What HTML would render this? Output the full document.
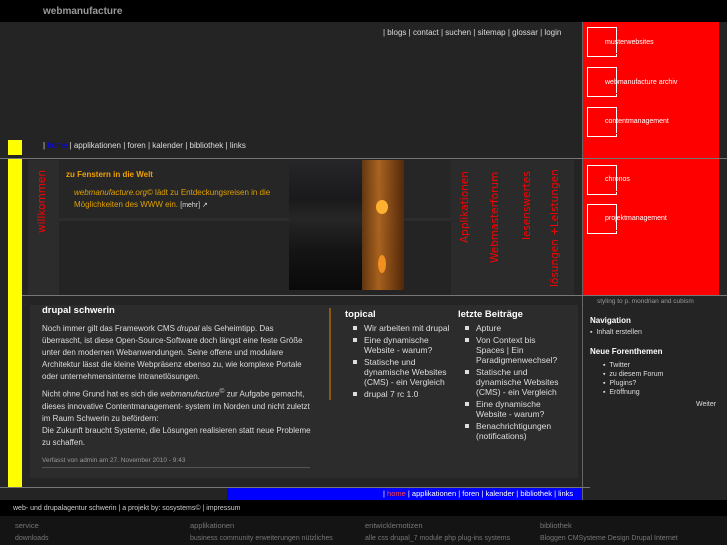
<!DOCTYPE html>
<html><head><meta charset="utf-8"><style>
*{margin:0;padding:0;box-sizing:border-box}
body{width:727px;height:545px;background:#242424;font-family:"Liberation Sans",sans-serif;position:relative;overflow:hidden;color:#ddd}
.a{position:absolute}
.t{font-size:8px;white-space:nowrap}
.box{position:absolute;left:587px;width:29px;height:30px;border:1px solid #fff;border-right:none}
.box:after{content:"";position:absolute;right:-1px;top:-1px;width:1px;height:26px;background:#fff}
.box:before{content:"";position:absolute;right:-1px;bottom:-1px;width:1px;height:3px;background:#fff}
.rl{position:absolute;left:605px;font-size:7px;color:#fff;white-space:nowrap}
.v{position:absolute;color:#f00;font-size:10.5px;line-height:12px;white-space:nowrap;transform:rotate(-90deg);transform-origin:left top;font-family:"DejaVu Sans",sans-serif}
ul{list-style:none}
li{position:relative;padding-left:14px;font-size:8.5px;line-height:10px;margin-bottom:2px;color:#ddd}
li:before{content:"";position:absolute;left:3px;top:3px;width:4px;height:4px;background:#ddd}
</style></head><body>
<div class="a" style="left:0;top:0;width:727px;height:22px;background:#000"></div>
<div class="a t" style="left:43px;top:6px;font-size:10px;font-weight:bold;color:#999">webmanufacture</div>
<div class="a t" style="left:383px;top:28px;color:#ddd">| blogs | contact | suchen | sitemap | glossar | login</div>
<div class="a" style="left:583px;top:22px;width:136px;height:273px;background:#f00"></div>
<div class="a" style="left:582px;top:22px;width:1px;height:480px;background:#666"></div>
<div class="box" style="top:27px"></div><div class="rl" style="top:39px">musterwebsites</div>
<div class="box" style="top:67px"></div><div class="rl" style="top:79px">webmanufacture archiv</div>
<div class="box" style="top:107px"></div><div class="rl" style="top:118px">contentmanagement</div>
<div class="box" style="top:165px"></div><div class="rl" style="top:176px">chronos</div>
<div class="box" style="top:204px"></div><div class="rl" style="top:215px">projektmanagement</div>
<div class="a" style="left:0;top:158px;width:727px;height:1px;background:#777"></div>
<div class="a" style="left:8px;top:140px;width:14px;height:15px;background:#ff0"></div>
<div class="a" style="left:8px;top:159px;width:14px;height:328px;background:#ff0"></div>
<div class="a t" style="left:43px;top:141px">| <span style="color:#00f">home</span> | applikationen | foren | kalender | bibliothek | links</div>
<div class="a" style="left:28px;top:160px;width:31px;height:135px;background:#2c2c2c"></div>
<div class="a" style="left:59px;top:160px;width:392px;height:58px;background:#262626"></div>
<div class="a" style="left:59px;top:218px;width:392px;height:3px;background:#2c2c2c"></div>
<div class="v" style="left:36px;top:233px">willkommen</div>
<div class="a t" style="left:66px;top:170px;color:#f0a000;font-weight:bold">zu Fenstern in die Welt</div>
<div class="a" style="left:74px;top:187px;width:210px;font-size:8px;line-height:12px;color:#e0a000"><i>webmanufacture.org©</i> lädt zu Entdeckungsreisen in die Möglichkeiten des WWW ein. <span style="color:#ddd;font-size:7px">[mehr] ↗</span></div>
<div class="a" style="left:289px;top:160px;width:115px;height:130px;background:linear-gradient(#262628,#1a1a1c 30%,#262626 45%,#141414 70%,#0a0a0a)"></div>
<div class="a" style="left:362px;top:160px;width:42px;height:130px;background:linear-gradient(90deg,#6a3a10,#b86a20 40%,#5a2a08);opacity:.9"></div>
<div class="a" style="left:376px;top:200px;width:12px;height:14px;border-radius:50%;background:#ffb030"></div>
<div class="a" style="left:378px;top:255px;width:8px;height:18px;border-radius:50%;background:#f09020"></div>
<div class="a" style="left:451px;top:160px;width:123px;height:135px;background:#2b2b2b"></div>
<div class="v" style="left:459px;top:243px">Applikationen</div>
<div class="v" style="left:489px;top:263px">Webmasterforum</div>
<div class="v" style="left:521px;top:240px">lesenswertes</div>
<div class="v" style="left:549px;top:287px">lösungen +Leistungen</div>
<div class="a" style="left:22px;top:295px;width:705px;height:1px;background:#777"></div>
<div class="a" style="left:30px;top:305px;width:548px;height:173px;background:#2c2c2c"></div>
<div class="a t" style="left:42px;top:305px;font-size:9.5px;font-weight:bold;color:#fff">drupal schwerin</div>
<div class="a" style="left:42px;top:323px;width:270px;font-size:8px;line-height:12px;color:#ddd">Noch immer gilt das Framework CMS <i>drupal</i> als Geheimtipp. Das überrascht, ist diese Open-Source-Software doch längst eine feste Größe unter den modernen Webanwendungen. Seine offene und modulare Architektur lässt die kleine Webpräsenz ebenso zu, wie komplexe Portale oder unternehmensinterne Intranetlösungen.<div style="height:3px"></div>Nicht ohne Grund hat es sich die <i>webmanufacture</i><sup>©</sup> zur Aufgabe gemacht, dieses innovative Contentmanagement- system im Norden und nicht zuletzt im Raum Schwerin zu befördern:<br>Die Zukunft braucht Systeme, die Lösungen realisieren statt neue Probleme zu schaffen.</div>
<div class="a t" style="left:42px;top:457px;font-size:6.5px;color:#999">Verfasst von admin am 27. November 2010 - 9:43</div>
<div class="a" style="left:42px;top:467px;width:268px;height:1px;background:#555"></div>
<div class="a" style="left:329px;top:308px;width:2px;height:92px;background:#8a5a10"></div>
<div class="a t" style="left:345px;top:309px;font-size:9.5px;font-weight:bold;color:#fff">topical</div>
<ul class="a" style="left:350px;top:323px;width:105px"><li>Wir arbeiten mit drupal</li><li>Eine dynamische Website - warum?</li><li>Statische und dynamische Websites (CMS) - ein Vergleich</li><li>drupal 7 rc 1.0</li></ul>
<div class="a t" style="left:458px;top:309px;font-size:9.5px;font-weight:bold;color:#fff">letzte Beiträge</div>
<div class="a" style="left:462px;top:323px;width:102px"><ul><li>Apture</li><li>Von Context bis Spaces | Ein Paradigmenwechsel?</li><li>Statische und dynamische Websites (CMS) - ein Vergleich</li><li>Eine dynamische Website - warum?</li><li>Benachrichtigungen (notifications)</li></ul></div>
<div class="a t" style="left:597px;top:298px;font-size:6.5px;color:#999">styling to p. mondrian and cubism</div>
<div class="a t" style="left:590px;top:316px;font-weight:bold;color:#fff">Navigation</div>
<div class="a t" style="left:590px;top:329px;font-size:7px">▪ &nbsp;Inhalt erstellen</div>
<div class="a t" style="left:590px;top:347px;font-weight:bold;color:#fff">Neue Forenthemen</div>
<div class="a" style="left:603px;top:361px;font-size:7px;line-height:9px;color:#ddd">▪ &nbsp;Twitter<br>▪ &nbsp;zu diesem Forum<br>▪ &nbsp;Plugins?<br>▪ &nbsp;Eröffnung</div>
<div class="a t" style="left:696px;top:401px;font-size:7px">Weiter</div>
<div class="a" style="left:0;top:487px;width:590px;height:1px;background:#777"></div>
<div class="a" style="left:227px;top:488px;width:355px;height:12px;background:#00f"></div>
<div class="a t" style="left:383px;top:489px;font-size:7.5px;color:#fff">| <span style="color:#f44">home</span> | applikationen | foren | kalender | bibliothek | links</div>
<div class="a" style="left:0;top:500px;width:727px;height:45px;background:#000"></div>
<div class="a t" style="left:13px;top:505px;font-size:7px;color:#ccc">web- und drupalagentur schwerin | a projekt by: sosystems© | impressum</div>
<div class="a" style="left:0;top:516px;width:727px;height:29px;background:#141414"></div>
<div class="a t" style="left:15px;top:521px;font-size:7.5px;color:#777">service</div>
<div class="a t" style="left:190px;top:521px;font-size:7.5px;color:#777">applikationen</div>
<div class="a t" style="left:365px;top:521px;font-size:7.5px;color:#777">entwicklernotizen</div>
<div class="a t" style="left:540px;top:521px;font-size:7.5px;color:#777">bibliothek</div>
<div class="a t" style="left:15px;top:535px;font-size:7px;color:#777">downloads</div>
<div class="a t" style="left:190px;top:535px;font-size:7px;color:#777">business community erweiterungen nützliches</div>
<div class="a t" style="left:365px;top:535px;font-size:7px;color:#777">alle css drupal_7 module php plug-ins systems</div>
<div class="a t" style="left:540px;top:535px;font-size:7px;color:#777">Bloggen CMSysteme Design Drupal Internet</div>
</body></html>
